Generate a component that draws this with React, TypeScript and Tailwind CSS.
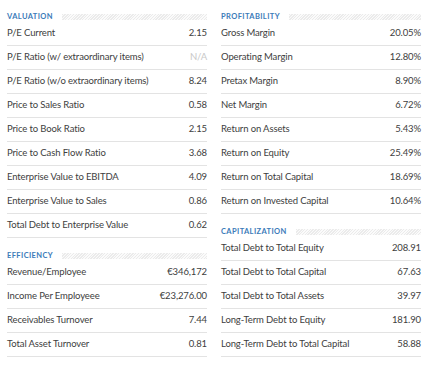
import React from 'react'

type Row = [string, string, boolean?]

const valuation: Row[] = [
    ['P/E Current', '2.15'],
    ['P/E Ratio (w/ extraordinary items)', 'N/A', true],
    ['P/E Ratio (w/o extraordinary items)', '8.24'],
    ['Price to Sales Ratio', '0.58'],
    ['Price to Book Ratio', '2.15'],
    ['Price to Cash Flow Ratio', '3.68'],
    ['Enterprise Value to EBITDA', '4.09'],
    ['Enterprise Value to Sales', '0.86'],
    ['Total Debt to Enterprise Value', '0.62'],
]

const efficiency: Row[] = [
    ['Revenue/Employee', '€346,172'],
    ['Income Per Employeee', '€23,276.00'],
    ['Receivables Turnover', '7.44'],
    ['Total Asset Turnover', '0.81'],
]

const profitability: Row[] = [
    ['Gross Margin', '20.05%'],
    ['Operating Margin', '12.80%'],
    ['Pretax Margin', '8.90%'],
    ['Net Margin', '6.72%'],
    ['Return on Assets', '5.43%'],
    ['Return on Equity', '25.49%'],
    ['Return on Total Capital', '18.69%'],
    ['Return on Invested Capital', '10.64%'],
]

const capitalization: Row[] = [
    ['Total Debt to Total Equity', '208.91'],
    ['Total Debt to Total Capital', '67.63'],
    ['Total Debt to Total Assets', '39.97'],
    ['Long-Term Debt to Equity', '181.90'],
    ['Long-Term Debt to Total Capital', '58.88'],
]

function Section({ title, rows, first }: { title: string; rows: Row[]; first?: boolean }) {
    return (
        <div className={first ? '' : 'mt-[13px]'}>
            {/* Header */}
            <div className="flex items-center h-[10px] gap-[9px]">
                <span className="text-[7.5px] font-bold tracking-[0.4px] text-[#3b7bb9] leading-none">{title}</span>
                <div className="flex-1 h-[6px] bg-[repeating-linear-gradient(135deg,#ebebeb_0,#ebebeb_1px,#fbfbfb_1px,#fbfbfb_2px)]" />
            </div>
            {rows.map(([label, value, muted]) => (
                <div key={label} className="flex items-center justify-between h-[24px] border-b border-[#e3e3e3]">
                    <span>{label}</span>
                    <span className={muted ? 'text-[#c8c8c8]' : ''}>{value}</span>
                </div>
            ))}
        </div>
    )
}

export default function App() {
    return (
        <div className="w-[431px] h-[371px] bg-white pt-[12px] pl-[7px] flex gap-[14px] text-[9.5px] tracking-[-0.12px] text-[#404040] font-['Lato',sans-serif]">
            <div className="w-[200px]">
                <Section title="VALUATION" rows={valuation} first />
                <Section title="EFFICIENCY" rows={efficiency} />
            </div>
            <div className="w-[200px]">
                <Section title="PROFITABILITY" rows={profitability} first />
                <Section title="CAPITALIZATION" rows={capitalization} />
            </div>
        </div>
    )
}
